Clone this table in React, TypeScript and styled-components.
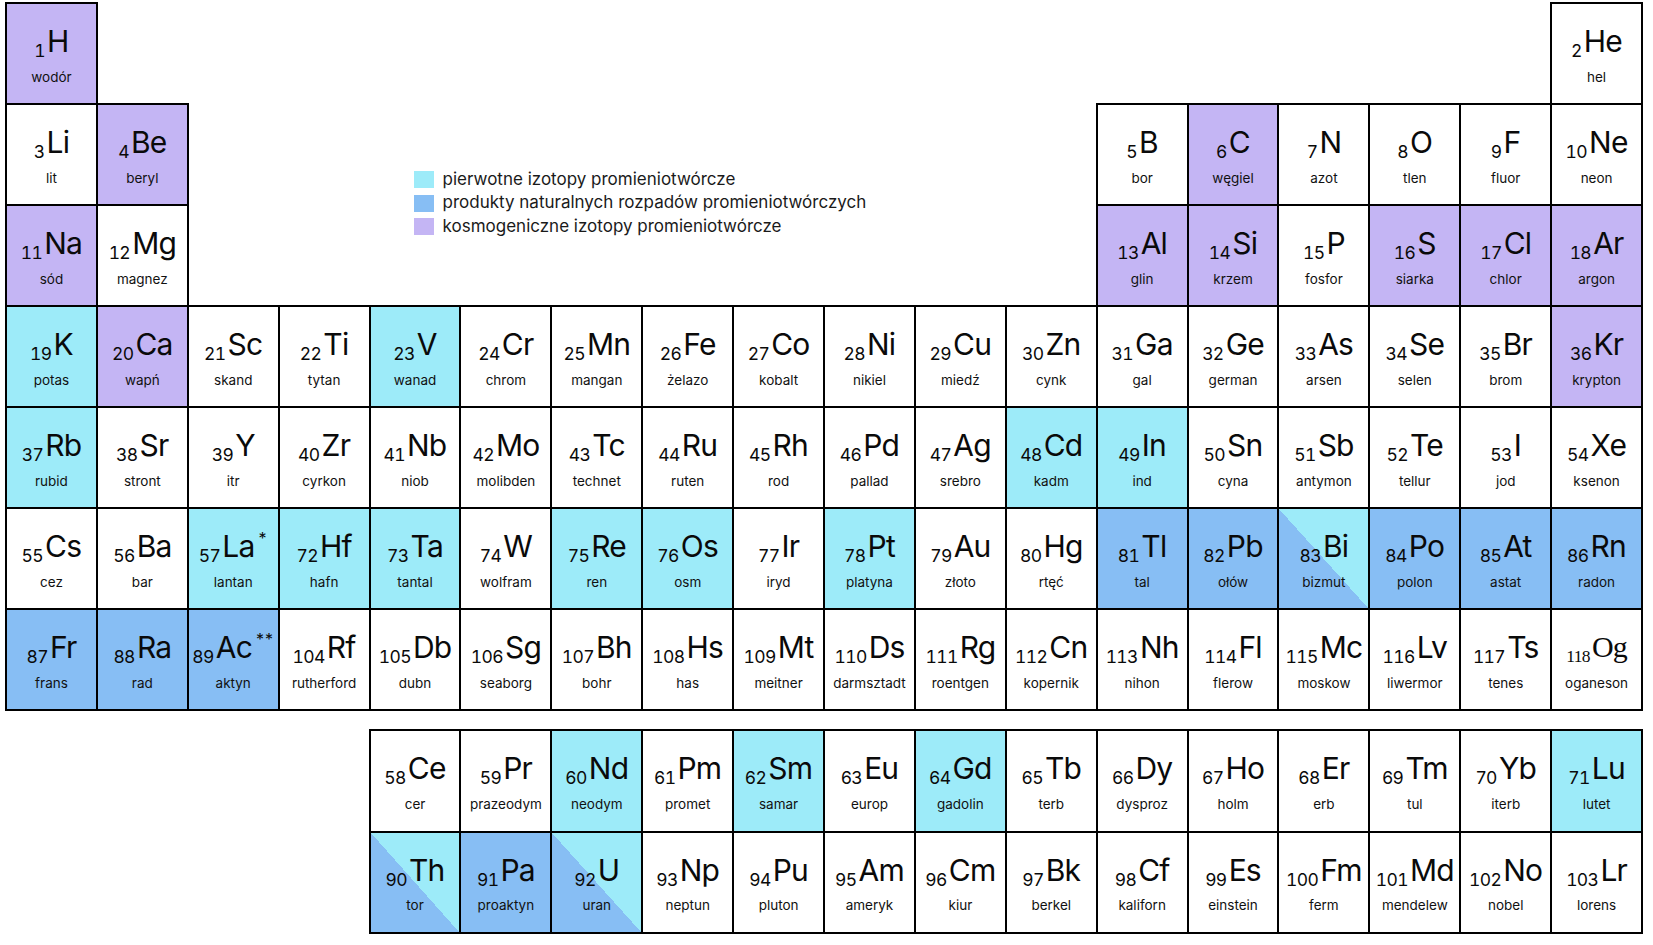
import React from 'react';
import styled, { createGlobalStyle } from 'styled-components';

type Kind = 'w' | 'c' | 'b' | 'p' | 'd';

const CYAN = '#9debf9';
const BLUE = '#87bef4';
const PURPLE = '#c4b5f4';

const background = (k: Kind): string => {
  switch (k) {
    case 'c':
      return CYAN;
    case 'b':
      return BLUE;
    case 'p':
      return PURPLE;
    case 'd':
      return `linear-gradient(to top right, ${BLUE} 50%, ${CYAN} 50%)`;
    default:
      return '#ffffff';
  }
};

interface Segment {
  row: number;
  col: number;
  items: string;
}

// each item: z:Symbol:name:kind[:mark]
const segments: Segment[] = [
  { row: 1, col: 1, items: '1:H:wodór:p' },
  { row: 1, col: 18, items: '2:He:hel:w' },
  { row: 2, col: 1, items: '3:Li:lit:w 4:Be:beryl:p' },
  { row: 2, col: 13, items: '5:B:bor:w 6:C:węgiel:p 7:N:azot:w 8:O:tlen:w 9:F:fluor:w 10:Ne:neon:w' },
  { row: 3, col: 1, items: '11:Na:sód:p 12:Mg:magnez:w' },
  { row: 3, col: 13, items: '13:Al:glin:p 14:Si:krzem:p 15:P:fosfor:w 16:S:siarka:p 17:Cl:chlor:p 18:Ar:argon:p' },
  {
    row: 4,
    col: 1,
    items:
      '19:K:potas:c 20:Ca:wapń:p 21:Sc:skand:w 22:Ti:tytan:w 23:V:wanad:c 24:Cr:chrom:w 25:Mn:mangan:w 26:Fe:żelazo:w 27:Co:kobalt:w 28:Ni:nikiel:w 29:Cu:miedź:w 30:Zn:cynk:w 31:Ga:gal:w 32:Ge:german:w 33:As:arsen:w 34:Se:selen:w 35:Br:brom:w 36:Kr:krypton:p',
  },
  {
    row: 5,
    col: 1,
    items:
      '37:Rb:rubid:c 38:Sr:stront:w 39:Y:itr:w 40:Zr:cyrkon:w 41:Nb:niob:w 42:Mo:molibden:w 43:Tc:technet:w 44:Ru:ruten:w 45:Rh:rod:w 46:Pd:pallad:w 47:Ag:srebro:w 48:Cd:kadm:c 49:In:ind:c 50:Sn:cyna:w 51:Sb:antymon:w 52:Te:tellur:w 53:I:jod:w 54:Xe:ksenon:w',
  },
  {
    row: 6,
    col: 1,
    items:
      '55:Cs:cez:w 56:Ba:bar:w 57:La:lantan:c:* 72:Hf:hafn:c 73:Ta:tantal:c 74:W:wolfram:w 75:Re:ren:c 76:Os:osm:c 77:Ir:iryd:w 78:Pt:platyna:c 79:Au:złoto:w 80:Hg:rtęć:w 81:Tl:tal:b 82:Pb:ołów:b 83:Bi:bizmut:d 84:Po:polon:b 85:At:astat:b 86:Rn:radon:b',
  },
  {
    row: 7,
    col: 1,
    items:
      '87:Fr:frans:b 88:Ra:rad:b 89:Ac:aktyn:b:** 104:Rf:rutherford:w 105:Db:dubn:w 106:Sg:seaborg:w 107:Bh:bohr:w 108:Hs:has:w 109:Mt:meitner:w 110:Ds:darmsztadt:w 111:Rg:roentgen:w 112:Cn:kopernik:w 113:Nh:nihon:w 114:Fl:flerow:w 115:Mc:moskow:w 116:Lv:liwermor:w 117:Ts:tenes:w 118:Og:oganeson:w',
  },
  {
    row: 9,
    col: 5,
    items:
      '58:Ce:cer:w 59:Pr:prazeodym:w 60:Nd:neodym:c 61:Pm:promet:w 62:Sm:samar:c 63:Eu:europ:w 64:Gd:gadolin:c 65:Tb:terb:w 66:Dy:dysproz:w 67:Ho:holm:w 68:Er:erb:w 69:Tm:tul:w 70:Yb:iterb:w 71:Lu:lutet:c',
  },
  {
    row: 10,
    col: 5,
    items:
      '90:Th:tor:d 91:Pa:proaktyn:b 92:U:uran:d 93:Np:neptun:w 94:Pu:pluton:w 95:Am:ameryk:w 96:Cm:kiur:w 97:Bk:berkel:w 98:Cf:kaliforn:w 99:Es:einstein:w 100:Fm:ferm:w 101:Md:mendelew:w 102:No:nobel:w 103:Lr:lorens:w',
  },
];

interface Element {
  z: string;
  s: string;
  n: string;
  k: Kind;
  mark?: string;
  row: number;
  col: number;
}

const elements: Element[] = segments.flatMap((seg) =>
  seg.items.split(' ').map((item, i) => {
    const [z, s, n, k, mark] = item.split(':');
    return { z, s, n, k: k as Kind, mark, row: seg.row, col: seg.col + i };
  })
);

const GlobalStyle = createGlobalStyle`
  html, body {
    margin: 0;
    padding: 0;
    background: #ffffff;
  }
  body {
    font-family: Inter, "Noto Sans", "Liberation Sans", sans-serif;
    color: #111;
  }
`;

const Page = styled.div`
  padding: 2px 0 12px 5px;
`;

const Table = styled.div`
  display: grid;
  grid-template-columns: repeat(18, 90.9px);
  grid-template-rows: repeat(7, 101px) 20px repeat(2, 101.5px);
  padding: 0 2px 2px 0;
  width: max-content;
`;

const Cell = styled.div<{ $kind: Kind; $row: number; $col: number }>`
  grid-row: ${(p) => p.$row};
  grid-column: ${(p) => p.$col};
  margin: 0 -2px -2px 0;
  border: 2px solid #000;
  background: ${(p) => background(p.$kind)};
  display: flex;
  flex-direction: column;
  align-items: center;
  padding-top: 19px;
  min-width: 0;
`;

const SymbolLine = styled.div<{ $serif: boolean }>`
  height: 36px;
  font-family: ${(p) =>
    p.$serif ? '"Liberation Serif", "DejaVu Serif", serif' : 'Inter, "Noto Sans", sans-serif'};
  font-size: 30px;
  line-height: 36px;
  letter-spacing: -0.8px;
  color: #0a0a0a;
  white-space: nowrap;
`;

const Num = styled.span`
  font-size: 17.5px;
  line-height: 1;
  vertical-align: -5px;
  font-variant-numeric: tabular-nums;
  letter-spacing: -0.6px;
  margin-right: 2px;
`;

const Mark = styled.sup`
  font-size: 16px;
  line-height: 1;
  vertical-align: 13px;
  margin-left: 4px;
  letter-spacing: 1px;
`;

const Name = styled.div`
  margin-top: 8.5px;
  font-family: Inter, "Noto Sans", sans-serif;
  font-size: 13.5px;
  line-height: 18px;
  color: #111;
  white-space: nowrap;
`;

const Legend = styled.div`
  grid-row: 2 / 4;
  grid-column: 5 / 14;
  align-self: start;
  padding: 65px 0 0 45px;
  display: flex;
  flex-direction: column;
`;

const LegendItem = styled.div`
  display: flex;
  align-items: center;
  gap: 9px;
  height: 23.5px;
  font-size: 17px;
  line-height: 20px;
  color: #1a1a1a;
  white-space: nowrap;
`;

const LegendLabel = styled.span`
  margin-top: -2px;
`;

const Swatch = styled.span<{ $color: string }>`
  width: 20px;
  height: 17px;
  flex: none;
  background: ${(p) => p.$color};
`;

const legend = [
  { color: CYAN, label: 'pierwotne izotopy promieniotwórcze' },
  { color: BLUE, label: 'produkty naturalnych rozpadów promieniotwórczych' },
  { color: PURPLE, label: 'kosmogeniczne izotopy promieniotwórcze' },
];

export default function App() {
  return (
    <Page>
      <GlobalStyle />
      <Table>
        {elements.map((el) => (
          <Cell key={el.z} $kind={el.k} $row={el.row} $col={el.col}>
            <SymbolLine $serif={el.s === 'Og'}>
              <Num>{el.z}</Num>
              {el.s}
              {el.mark && <Mark>{el.mark}</Mark>}
            </SymbolLine>
            <Name>{el.n}</Name>
          </Cell>
        ))}
        <Legend>
          {legend.map((l) => (
            <LegendItem key={l.label}>
              <Swatch $color={l.color} />
              <LegendLabel>{l.label}</LegendLabel>
            </LegendItem>
          ))}
        </Legend>
      </Table>
    </Page>
  );
}
